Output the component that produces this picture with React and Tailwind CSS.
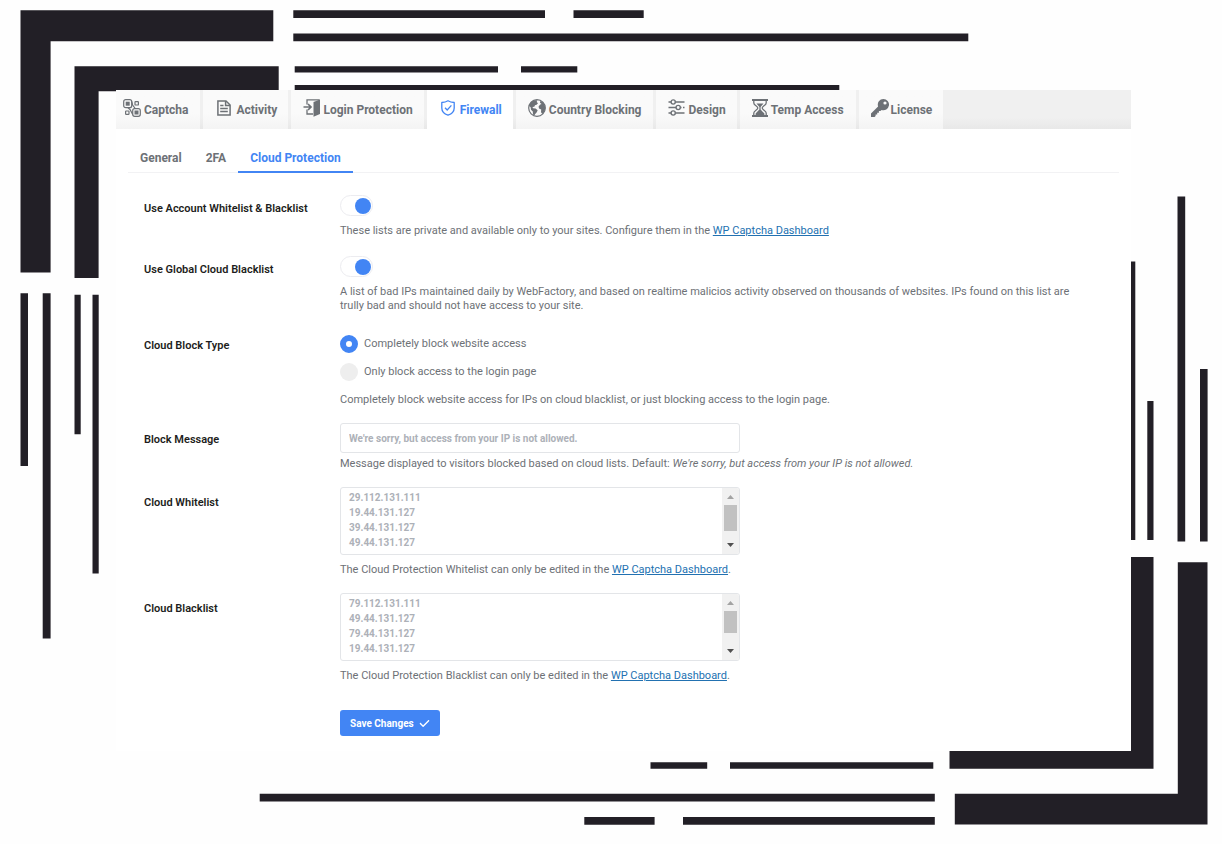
import { useState } from "react";
import { FaCheck } from "react-icons/fa6";

const INK = "#221f26";

const ipWhitelist = ["29.112.131.111", "19.44.131.127", "39.44.131.127", "49.44.131.127"];
const ipBlacklist = ["79.112.131.111", "49.44.131.127", "79.44.131.127", "19.44.131.127"];

function CaptchaIcon() {
  return (
    <svg viewBox="0 0 18 18" className="size-[18px]" fill="none" stroke="currentColor" aria-hidden="true">
      <rect x="0.7" y="0.7" width="8" height="8" rx="2" strokeWidth="1.2" />
      <rect x="2.7" y="2.7" width="4" height="4" fill="currentColor" stroke="none" />
      <rect x="9.7" y="9.7" width="7.6" height="7.6" rx="2" strokeWidth="1.2" />
      <rect x="11.5" y="11.5" width="4" height="4" fill="currentColor" stroke="none" />
      <rect x="12" y="2.6" width="3.4" height="3.4" rx="0.6" strokeWidth="1.2" />
      <rect x="2.6" y="12" width="3.4" height="3.4" rx="0.6" strokeWidth="1.2" />
      <path d="M8.7 2.5 L9.6 6 L12.2 9.5 M5 8.7 L7 10.5 L9.7 15.5" strokeWidth="1.2" />
    </svg>
  );
}

function ActivityIcon() {
  return (
    <svg viewBox="0 0 14 16" className="h-4 w-3.5" fill="none" stroke="currentColor" strokeWidth="1.5" aria-hidden="true">
      <path d="M0.9 0.9 H9 L13.1 5 V15.1 H0.9 Z" />
      <path d="M8.6 1 V5.4 H13 M3.2 5.5 H6.5 M3.2 8.5 H10.8 M3.2 11.5 H10.8" />
    </svg>
  );
}

function LoginIcon() {
  return (
    <svg viewBox="0 0 18 18" className="size-[18px]" fill="none" stroke="currentColor" aria-hidden="true">
      <path d="M4 5.5 V0.8 H16.5 M4 10.5 V15 H10" strokeWidth="1.3" />
      <path d="M10.5 3 L17 0.5 V15 L10.5 17.8 Z" fill="currentColor" stroke="none" />
      <path d="M0.5 8 H7.5 M5 5 L8 8 L5 11" strokeWidth="1.7" />
    </svg>
  );
}

function FirewallIcon() {
  return (
    <svg viewBox="0 0 14 16" className="h-4 w-3.5" fill="none" stroke="currentColor" strokeWidth="1.3" aria-hidden="true">
      <path d="M7 0.8 C5 2 3 2.4 0.8 2.5 V8 C0.8 11.4 3 13.8 7 15.2 C11 13.8 13.2 11.4 13.2 8 V2.5 C11 2.4 9 2 7 0.8 Z" strokeLinejoin="round" />
      <path d="M4 7.8 L6.2 10 L10.4 5.4" />
    </svg>
  );
}

function CountryIcon() {
  return (
    <svg viewBox="0 0 18 18" className="size-[18px]" aria-hidden="true">
      <circle cx="9" cy="9" r="8.3" fill="none" stroke="currentColor" strokeWidth="1.2" />
      <path
        d="M5.5 1.3 L9.4 1.2 L8.7 3 L10 4.2 L8.6 5.8 L7 6.2 L6.3 7.8 L4.4 8 L5.2 9.3 L7.6 9.4 L9.7 11.2 L8.6 13.6 L7.2 15 L6.4 16.6 L5 15.6 L4.8 12.6 L3 10.8 L2.6 8.2 L1 6.8 C1.6 4.2 3.2 2.3 5.5 1.3 Z"
        fill="currentColor"
      />
      <path
        d="M12.2 2 L14.6 3 C16.4 4.7 17.4 7 17.2 9.4 C17 11.6 16 13.6 14.4 15 L13 13.2 L13.2 10.6 L11 9.6 L10.6 7.4 L12.2 5.6 L13.6 5 L12 3.8 Z"
        fill="currentColor"
      />
    </svg>
  );
}

function DesignIcon() {
  return (
    <svg viewBox="0 0 17 17" className="size-[17px]" fill="none" stroke="currentColor" strokeWidth="1.4" aria-hidden="true">
      <path d="M0.5 3 H3 M7.5 3 H16.5 M0.5 8.5 H8 M12.5 8.5 H13.5 M15 8.5 H16.5 M0.5 14 H3 M7.5 14 H16.5" />
      <circle cx="5.2" cy="3" r="2.1" />
      <circle cx="10.2" cy="8.5" r="2.1" />
      <circle cx="5.2" cy="14" r="2.1" />
    </svg>
  );
}

function TempAccessIcon() {
  return (
    <svg viewBox="0 0 16 18" className="h-[18px] w-4" fill="none" stroke="currentColor" strokeWidth="1.3" aria-hidden="true">
      <path d="M0 1 H16 M0 17 H16" strokeWidth="1.8" />
      <path d="M1.8 1 V4 C1.8 6.5 5.8 7 5.8 9 C5.8 11 1.8 11.5 1.8 14 V17 M14.2 1 V4 C14.2 6.5 10.2 7 10.2 9 C10.2 11 14.2 11.5 14.2 14 V17" />
      <path d="M4.5 4.6 H11.5 L8.6 8 V10.6 L12.4 14.6 V16 H3.6 V14.6 L7.4 10.6 V8 Z" fill="currentColor" stroke="none" />
    </svg>
  );
}

function LicenseIcon() {
  return (
    <svg viewBox="0 0 18 18" className="size-[18px]" aria-hidden="true">
      <path
        fill="currentColor"
        fillRule="evenodd"
        d="M12.4 0 A5.6 5.6 0 1 1 10.6 10.9 L9.4 12.1 H7.9 V13.8 H6.2 V15.5 H4.6 V16.9 L3.6 18 H0 V14.5 L7.1 7.4 A5.6 5.6 0 0 1 12.4 0 Z M14 2.4 A1.6 1.6 0 1 0 14 5.6 A1.6 1.6 0 1 0 14 2.4 Z"
      />
    </svg>
  );
}

const mainTabs = [
  { name: "Captcha", Icon: CaptchaIcon, pad: "pl-[7px] pr-3", gap: "gap-[3px]" },
  { name: "Activity", Icon: ActivityIcon, pad: "pl-3.5 pr-[11px]", gap: "gap-[5px]" },
  { name: "Login Protection", Icon: LoginIcon, pad: "pl-3 pr-[11px]", gap: "gap-0.5" },
  { name: "Firewall", Icon: FirewallIcon, pad: "pl-3.5 pr-[11px]", gap: "gap-[5px]" },
  { name: "Country Blocking", Icon: CountryIcon, pad: "pl-3 pr-3", gap: "gap-[3px]" },
  { name: "Design", Icon: DesignIcon, pad: "pl-3 pr-[11px]", gap: "gap-[3px]" },
  { name: "Temp Access", Icon: TempAccessIcon, pad: "pl-3 pr-3", gap: "gap-[3px]" },
  { name: "License", Icon: LicenseIcon, pad: "pl-3 pr-[11px]", gap: "gap-0.5" },
];

const subTabs = ["General", "2FA", "Cloud Protection"];

function Backdrop() {
  return (
    <div className="pointer-events-none absolute inset-0 overflow-hidden" aria-hidden="true">
      <svg className="absolute top-0 left-0" width="970" height="640" viewBox="0 0 970 640" fill={INK}>
        <path d="M20.5 10.3 H273.3 V41.2 H50.6 V272.5 H20.5 Z" />
        <path d="M74.5 66.2 H278.7 V91.2 H98.6 V278 H74.5 Z" />
        <path d="M293.3 10.2 H545 V18 H293.3 Z M573.5 10.2 H643.7 V18 H573.5 Z M293.3 33.5 H968.3 V41.2 H293.3 Z" />
        <path d="M294.7 66.2 H498 V72.5 H294.7 Z M521 66.2 H577.3 V72.5 H521 Z M294.7 85 H839.3 V91.2 H294.7 Z" />
        <path d="M20.5 293.3 H28 V466 H20.5 Z M42.7 293.3 H50.6 V638.5 H42.7 Z" />
        <path d="M74.5 294.7 H80.7 V434.2 H74.5 Z M92.5 294.7 H98.7 V573.5 H92.5 Z" />
      </svg>
      <svg className="absolute right-0 bottom-0" width="970" height="650" viewBox="252 194 970 650" fill={INK}>
        <path d="M1177.8 562.3 H1207.5 V824.6 H954.8 V793.7 H1177.8 Z" />
        <path d="M1129.5 557 H1153.5 V768.7 H949.5 V744 H1129.5 Z" />
        <path d="M1129.3 261.5 H1135.3 V540 H1129.3 Z M1147.3 401 H1153.5 V540 H1147.3 Z" />
        <path d="M1177.5 196.5 H1185.2 V541.5 H1177.5 Z M1200 369 H1207.6 V541.5 H1200 Z" />
        <path d="M650.5 762.3 H707.2 V768.7 H650.5 Z M730 762.3 H933.3 V768.7 H730 Z" />
        <path d="M259.7 793.8 H934.8 V801.5 H259.7 Z M584.3 817 H654.6 V824.8 H584.3 Z M683 817 H934.8 V824.8 H683 Z" />
      </svg>
    </div>
  );
}

function Row({ label, htmlFor, labelPad, children }) {
  return (
    <div className="flex">
      <div className={`w-[196px] shrink-0 text-[11px] leading-3.5 font-semibold text-[#1d1d20] ${labelPad}`}>
        {htmlFor ? <label htmlFor={htmlFor}>{label}</label> : <span id="block-type">{label}</span>}
      </div>
      <div className="min-w-0 flex-1">{children}</div>
    </div>
  );
}

function Hint({ children, className = "mt-2" }) {
  return <p className={`max-w-[750px] text-[11px] leading-3.5 text-[#6d7176] ${className}`}>{children}</p>;
}

function DashboardLink() {
  return (
    <a href="#dashboard" className="text-[#2271b1] underline">
      WP Captcha Dashboard
    </a>
  );
}

function Toggle({ id }) {
  return (
    <input
      id={id}
      type="checkbox"
      defaultChecked
      className="flex h-[21px] w-[33px] appearance-none items-center rounded-full border border-[#ececf0] bg-white px-px before:size-4 before:rounded-full before:bg-[#c8cbd0] checked:justify-end checked:before:bg-[#4285f4]"
    />
  );
}

function IpList({ id, ips, thumb }) {
  return (
    <div className="flex h-[68px] max-w-[400px] overflow-hidden rounded-[3px] border border-[#e3e5e8] bg-white">
      <textarea
        id={id}
        readOnly
        rows={4}
        defaultValue={ips.join("\n")}
        className="min-w-0 flex-1 resize-none overflow-hidden px-2 py-0.5 text-[10px] leading-[15px] font-bold text-[#adb1b8] outline-none"
      />
      <div className="flex w-[17px] flex-col items-center bg-[#f1f1f1]" aria-hidden="true">
        <svg viewBox="0 0 17 17" className="size-[17px]">
          <path d="M5 11 L8.5 7 L12 11 Z" fill="#a3a3a3" />
        </svg>
        <div className={`w-[13px] bg-[#c1c1c1] ${thumb}`} />
        <svg viewBox="0 0 17 17" className="mt-auto size-[17px]">
          <path d="M5 6 L8.5 10 L12 6 Z" fill="#505050" />
        </svg>
      </div>
    </div>
  );
}

export default function App() {
  const [blockType, setBlockType] = useState("site");

  const radioClass =
    "size-[18px] appearance-none rounded-full bg-[#eeeeee] checked:border-[6px] checked:border-[#4285f4] checked:bg-white";

  return (
    <div className="relative min-h-screen bg-[#fefefe] pt-[90px] pr-[91px] pb-[93px] pl-[116px] font-['Roboto',sans-serif]">
      <Backdrop />

      <main className="relative bg-white pb-[15px]">
        <nav className="flex h-[39px] bg-linear-to-b from-[#f0f0f0] from-70% to-[#e8e8e8]">
          {mainTabs.map(({ name, Icon, pad, gap }) => {
            const active = name === "Firewall";

            return (
              <a
                key={name}
                href="#tab"
                className={`mr-[3px] flex items-center text-xs font-bold whitespace-nowrap last:mr-0 ${pad} ${gap} ${
                  active ? "bg-white text-[#4285f4]" : "bg-linear-to-b from-[#fafafa] from-60% to-[#f4f4f4] text-[#6d7176]"
                }`}
              >
                <span className="pb-1">
                  <Icon />
                </span>
                <span>{name}</span>
              </a>
            );
          })}
        </nav>

        <nav className="mx-3 mt-3.5 flex border-b border-[#f2f2f4]">
          {subTabs.map((name) => (
            <a
              key={name}
              href="#subtab"
              className={`-mb-px border-b-2 px-3 pt-[7px] pb-[5px] text-xs font-bold ${
                name === "Cloud Protection" ? "border-[#4285f4] text-[#4285f4]" : "border-transparent text-[#6d7176]"
              }`}
            >
              {name}
            </a>
          ))}
        </nav>

        <form className="mx-7 mt-[22px] flex flex-col gap-4" onSubmit={(event) => event.preventDefault()}>
          <Row label="Use Account Whitelist &amp; Blacklist" htmlFor="account-lists" labelPad="pt-[7px]">
            <Toggle id="account-lists" />
            <Hint className="mt-2 pb-0.5">
              These lists are private and available only to your sites. Configure them in the <DashboardLink />
            </Hint>
          </Row>

          <Row label="Use Global Cloud Blacklist" htmlFor="global-blacklist" labelPad="pt-[7px]">
            <Toggle id="global-blacklist" />
            <Hint className="mt-2 pb-0.5">
              A list of bad IPs maintained daily by WebFactory, and based on realtime malicios activity observed on
              thousands of websites. IPs found on this list are trully bad and should not have access to your site.
            </Hint>
          </Row>

          <Row label="Cloud Block Type" labelPad="pt-2">
            <div
              role="radiogroup"
              aria-labelledby="block-type"
              className="flex flex-col gap-2.5 pt-1 text-[11px] leading-3.5 text-[#6d7176]"
            >
              <label className="flex items-center gap-1.5">
                <input
                  type="radio"
                  name="block-type"
                  className={radioClass}
                  checked={blockType === "site"}
                  onChange={() => setBlockType("site")}
                />
                Completely block website access
              </label>
              <label className="flex items-center gap-1.5">
                <input
                  type="radio"
                  name="block-type"
                  className={radioClass}
                  checked={blockType === "login"}
                  onChange={() => setBlockType("login")}
                />
                Only block access to the login page
              </label>
            </div>
            <Hint className="mt-3">
              Completely block website access for IPs on cloud blacklist, or just blocking access to the login page.
            </Hint>
          </Row>

          <Row label="Block Message" htmlFor="block-message" labelPad="pt-2.5">
            <input
              id="block-message"
              type="text"
              placeholder="We're sorry, but access from your IP is not allowed."
              className="block h-[30px] w-full max-w-[400px] rounded-[3px] border border-[#e3e5e8] bg-white px-2 text-[10px] font-bold text-[#6d7176] outline-none placeholder:text-[#adb1b8]"
            />
            <Hint className="mt-1">
              Message displayed to visitors blocked based on cloud lists. Default:{" "}
              <em>We're sorry, but access from your IP is not allowed.</em>
            </Hint>
          </Row>

          <Row label="Cloud Whitelist" htmlFor="cloud-whitelist" labelPad="pt-[9px]">
            <IpList id="cloud-whitelist" ips={ipWhitelist} thumb="h-[26px]" />
            <Hint>
              The Cloud Protection Whitelist can only be edited in the <DashboardLink />.
            </Hint>
          </Row>

          <Row label="Cloud Blacklist" htmlFor="cloud-blacklist" labelPad="pt-[9px]">
            <IpList id="cloud-blacklist" ips={ipBlacklist} thumb="h-[22px]" />
            <Hint>
              The Cloud Protection Blacklist can only be edited in the <DashboardLink />.
            </Hint>
          </Row>

          <div className="pt-[11px] pl-[196px]">
            <button
              type="submit"
              className="flex h-[26px] items-center gap-[5px] rounded-[3px] bg-[#4285f4] px-2.5 text-[10px] font-bold text-white"
            >
              Save Changes
              <FaCheck className="size-[11px]" />
            </button>
          </div>
        </form>
      </main>
    </div>
  );
}
